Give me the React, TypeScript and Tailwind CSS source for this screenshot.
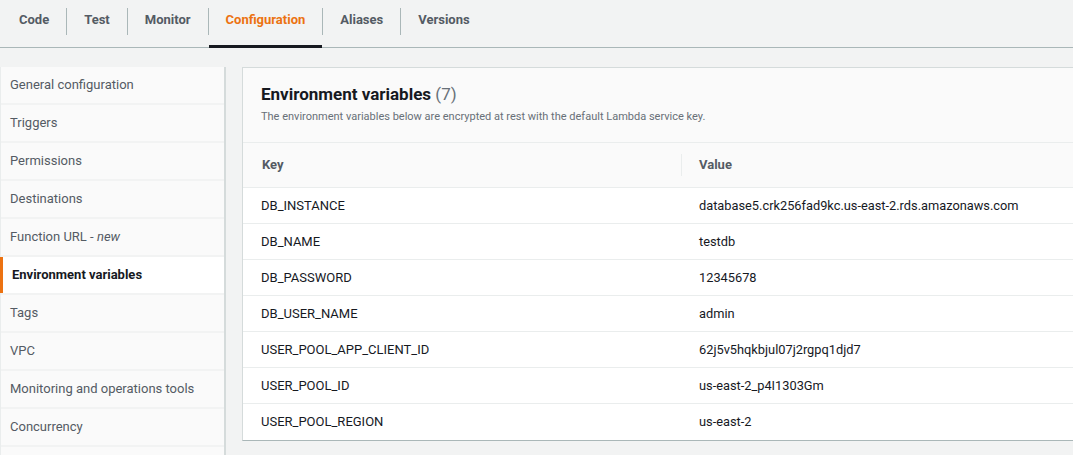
import React from "react";

const tabs = ["Code", "Test", "Monitor", "Configuration", "Aliases", "Versions"];
const side = [
  "General configuration",
  "Triggers",
  "Permissions",
  "Destinations",
  "FURL",
  "Environment variables",
  "Tags",
  "VPC",
  "Monitoring and operations tools",
  "Concurrency",
  "",
];
const rows: [string, string][] = [
  ["DB_INSTANCE", "database5.crk256fad9kc.us-east-2.rds.amazonaws.com"],
  ["DB_NAME", "testdb"],
  ["DB_PASSWORD", "12345678"],
  ["DB_USER_NAME", "admin"],
  ["USER_POOL_APP_CLIENT_ID", "62j5v5hqkbjul07j2rgpq1djd7"],
  ["USER_POOL_ID", "us-east-2_p4I1303Gm"],
  ["USER_POOL_REGION", "us-east-2"],
];

export default function App() {
  return (
    <div
      className="w-[1073px] h-[455px] overflow-hidden bg-[#f2f3f3] text-[#16191f]"
      style={{ fontFamily: "Roboto, 'Noto Sans', sans-serif" }}
    >
      {/* Tabs */}
      <div className="h-[48px] border-b border-[#aab7b8] flex items-stretch pl-[2px]">
        {tabs.map((t, i) => {
          const active = t === "Configuration";
          return (
            <div key={t} className="flex items-stretch">
              {i > 0 && <div className="w-px bg-[#aab7b8] mt-[8px] h-[27px]" />}
              <div
                className={
                  "relative flex items-center pb-[7px] px-[17px] text-[13px] font-bold " +
                  (active ? "text-[#ec7211]" : "text-[#545b64]")
                }
              >
                {t}
                {active && (
                  <div className="absolute left-0 right-0 bottom-[-1px] h-[3px] bg-[#16191f]" />
                )}
              </div>
            </div>
          );
        })}
      </div>

      <div className="flex pt-[19px] gap-[16px]">
        {/* Sidebar */}
        <div className="w-[226px] shrink-0 flex flex-col gap-[2px] border-r-2 border-[#d5dbdb] border-l border-l-[#eaeded]">
          {side.map((s, i) => {
            const active = s === "Environment variables";
            return (
              <div
                key={i}
                className={
                  "h-[36px] flex items-center pl-[9px] text-[13px] " +
                  (active
                    ? "bg-white font-bold text-[#16191f] border-l-[3px] border-[#ec7211] -ml-px pl-[6px]"
                    : "bg-[#fafafa] text-[#545b64]")
                }
              >
                {s === "FURL" ? (
                  <span>
                    Function URL - <i>new</i>
                  </span>
                ) : (
                  s
                )}
              </div>
            );
          })}
        </div>

        {/* Panel */}
        <div className="flex-1 self-start bg-white border-l border-t border-[#d5dbdb] border-b border-b-[#aab7b8] min-w-0">
          <div className="bg-[#fafafa] border-b border-[#eaeded] pl-[18px] pt-[15px] pb-[17px]">
            <div className="text-[17px] font-bold text-[#16191f] leading-[22px]">
              Environment variables <span className="font-normal text-[#687078]">(7)</span>
            </div>
            <div className="text-[11px] text-[#687078] mt-[4px] leading-[16px]">
              The environment variables below are encrypted at rest with the default Lambda service key.
            </div>
          </div>
          <div className="h-[45px] bg-[#fafafa] border-b border-[#eaeded] flex items-center text-[13px] font-bold text-[#545b64]">
            <div className="w-[438px] pl-[19px]">Key</div>
            <div className="w-px h-[22px] bg-[#eaeded]" />
            <div className="pl-[17px]">Value</div>
          </div>
          {rows.map(([k, v], i) => (
            <div
              key={k}
              className={
                "h-[36px] flex items-center text-[13px] text-[#16191f] " +
                (i < rows.length - 1 ? "border-b border-[#eaeded]" : "")
              }
            >
              <div className="w-[439px] pl-[18px]">{k}</div>
              <div className="pl-[17px] text-[12.8px]">{v}</div>
            </div>
          ))}
        </div>
      </div>
    </div>
  );
}
